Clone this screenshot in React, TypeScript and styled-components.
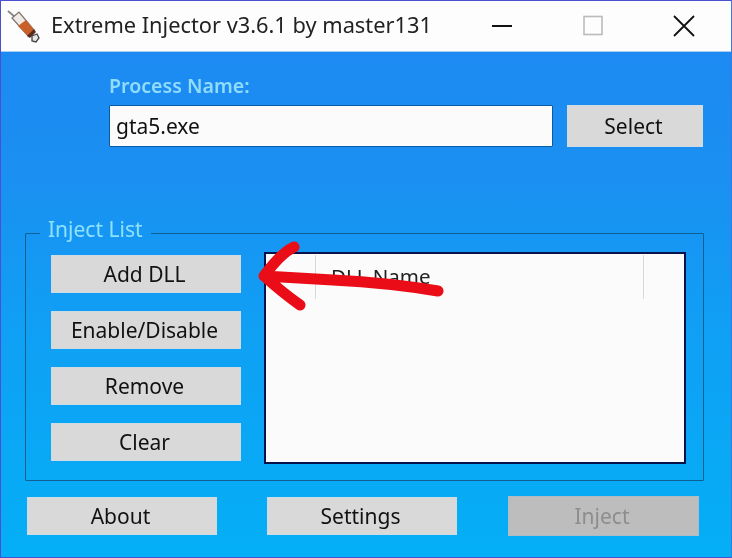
import React from "react";
import styled, { createGlobalStyle } from "styled-components";

const Global = createGlobalStyle`
  html, body { margin: 0; padding: 0; background: #1e88f0; }
  * { box-sizing: border-box; }
`;

const Win = styled.div`
  position: relative;
  width: 732px;
  height: 558px;
  border: 1px solid #4a50d0;
  border-right-color: #3f78d8;
  display: flex;
  flex-direction: column;
  overflow: hidden;
  font-family: "Noto Sans", "Open Sans", sans-serif;
  background: linear-gradient(180deg, #1d88f2 0%, #1b8ff2 30%, #0fa0f4 60%, #04aff6 100%);
  filter: blur(0.45px);
`;

const TitleBar = styled.div`
  height: 51px;
  flex: none;
  background: #fdfdfd;
  border-bottom: 1px solid #a9cff3;
  display: flex;
  align-items: center;
  padding-left: 6px;
`;

const AppIcon = styled.svg`
  width: 36px;
  height: 36px;
  flex: none;
`;

const Title = styled.div`
  margin-left: 8px;
  font-size: 21.8px;
  line-height: 28px;
  color: #222;
  white-space: nowrap;
  flex: 1;
  margin-top: -2px;
`;

const WinControl = styled.svg`
  width: 24px;
  height: 24px;
  flex: none;
  margin-top: -1px;
`;

const WinControls = styled.div`
  display: flex;
  align-items: center;
  gap: 67px;
  padding-right: 35px;
`;

const Body = styled.div`
  flex: 1;
  display: flex;
  flex-direction: column;
  padding: 22px 27px 0 24px;
`;

const Label = styled.div`
  margin-left: 84px;
  height: 24px;
  font-size: 19.6px;
  line-height: 24px;
  font-weight: 600;
  color: #8fdcfb;
`;

const ProcessRow = styled.div`
  margin-top: 7px;
  margin-left: 84px;
  display: flex;
  gap: 14px;
`;

const Input = styled.div`
  width: 444px;
  height: 42px;
  background: #fbfbfb;
  border: 1px solid #0a5aa6;
  border-radius: 1px;
  padding-left: 6px;
  font-size: 21px;
  line-height: 40px;
  color: #111;
`;

const Btn = styled.div<{ $disabled?: boolean; $w?: number }>`
  width: ${(p) => (p.$w ? p.$w : 190)}px;
  height: 38px;
  display: flex;
  align-items: center;
  justify-content: center;
  padding-right: 3px;
  background: ${(p) => (p.$disabled ? "#bdbdbd" : "#d9d9d9")};
  border: 1px solid ${(p) => (p.$disabled ? "#b0bcc4" : "#cfdbe3")};
  color: ${(p) => (p.$disabled ? "#8d8d8d" : "#111")};
  font-size: 21px;
  line-height: 24px;
`;

const SelectBtn = styled(Btn)`
  height: 42px;
`;

const Group = styled.fieldset`
  margin: 70px 0 0 0;
  padding: 3px 0 0 25px;
  width: 679px;
  height: 264px;
  border: 1px solid #0e5f92;
  border-radius: 1px;
  min-width: 0;
  display: flex;
  gap: 23px;
`;

const Legend = styled.legend`
  margin-left: -11px;
  padding: 0 8px 8px;
  font-size: 21px;
  line-height: 24px;
  color: #8fe2fb;
`;

const ButtonColumn = styled.div`
  display: flex;
  flex-direction: column;
  gap: 18px;
  padding-top: 3px;
`;

const ListView = styled.div`
  width: 422px;
  height: 212px;
  background: #fbfbfb;
  border: 2px solid #07124a;
  display: flex;
`;

const HeaderCell = styled.div<{ $w: number }>`
  width: ${(p) => p.$w}px;
  height: 44px;
  margin-top: 1px;
  border-right: 1px solid #d8d8d8;
  padding: 9px 0 0 15px;
  font-size: 20.5px;
  line-height: 24px;
  color: #222;
  flex: none;
`;

const BottomRow = styled.div`
  margin-top: 15px;
  margin-left: 2px;
  display: flex;
  align-items: center;
  gap: 50px;
`;

const InjectBtn = styled(Btn)`
  height: 40px;
  margin-left: 1px;
`;

const ArrowOverlay = styled.svg`
  position: absolute;
  left: 0;
  top: 0;
  width: 732px;
  height: 558px;
  pointer-events: none;
`;

export default function App() {
  return (
    <>
      <Global />
      <Win>
        <TitleBar>
          <AppIcon viewBox="7 8 36 36">
            <path d="M8 11 L15 17" stroke="#8a8a8a" strokeWidth="2" />
            <path d="M12 18 L19 12 L34 30 L28 36 Z" fill="#efeae6" stroke="#7a716c" strokeWidth="1.2" />
            <path d="M18 26 L26 20 L34 30 L28 36 Z" fill="#c9602a" />
            <path d="M27 36 L34 29 L36 32 L30 38 Z" fill="#5c2a1c" />
            <path d="M32 36 L37 34 L39 38 L36 42 L32 41 Z" fill="#e6e6e6" stroke="#444" strokeWidth="1.3" />
          </AppIcon>
          <Title>Extreme Injector v3.6.1 by master131</Title>
          <WinControls>
            <WinControl viewBox="0 0 24 24">
              <path d="M2 12 H22" stroke="#111" strokeWidth="2" />
            </WinControl>
            <WinControl viewBox="0 0 24 24">
              <rect x="3" y="2.5" width="18" height="18" fill="none" stroke="#bbb" strokeWidth="1.6" />
            </WinControl>
            <WinControl viewBox="0 0 24 24">
              <path d="M2 2 L22 22 M22 2 L2 22" stroke="#111" strokeWidth="1.8" />
            </WinControl>
          </WinControls>
        </TitleBar>
        <Body>
          <Label>Process Name:</Label>
          <ProcessRow>
            <Input>gta5.exe</Input>
            <SelectBtn $w={136}>Select</SelectBtn>
          </ProcessRow>
          <Group>
            <Legend>Inject List</Legend>
            <ButtonColumn>
              <Btn>Add DLL</Btn>
              <Btn>Enable/Disable</Btn>
              <Btn>Remove</Btn>
              <Btn>Clear</Btn>
            </ButtonColumn>
            <ListView>
              <HeaderCell $w={50} />
              <HeaderCell $w={328}>DLL Name</HeaderCell>
            </ListView>
          </Group>
          <BottomRow>
            <Btn>About</Btn>
            <Btn>Settings</Btn>
            <InjectBtn $disabled $w={191}>Inject</InjectBtn>
          </BottomRow>
        </Body>
        <ArrowOverlay viewBox="0 0 732 558">
          <path
            d="M293 246 Q280 252 263 275 Q282 292 299 304 M263 275 Q300 277 332 279 Q390 282 437 290"
            fill="none"
            stroke="#ea0c16"
            strokeWidth="11"
            strokeLinecap="round"
            strokeLinejoin="round"
          />
        </ArrowOverlay>
      </Win>
    </>
  );
}
